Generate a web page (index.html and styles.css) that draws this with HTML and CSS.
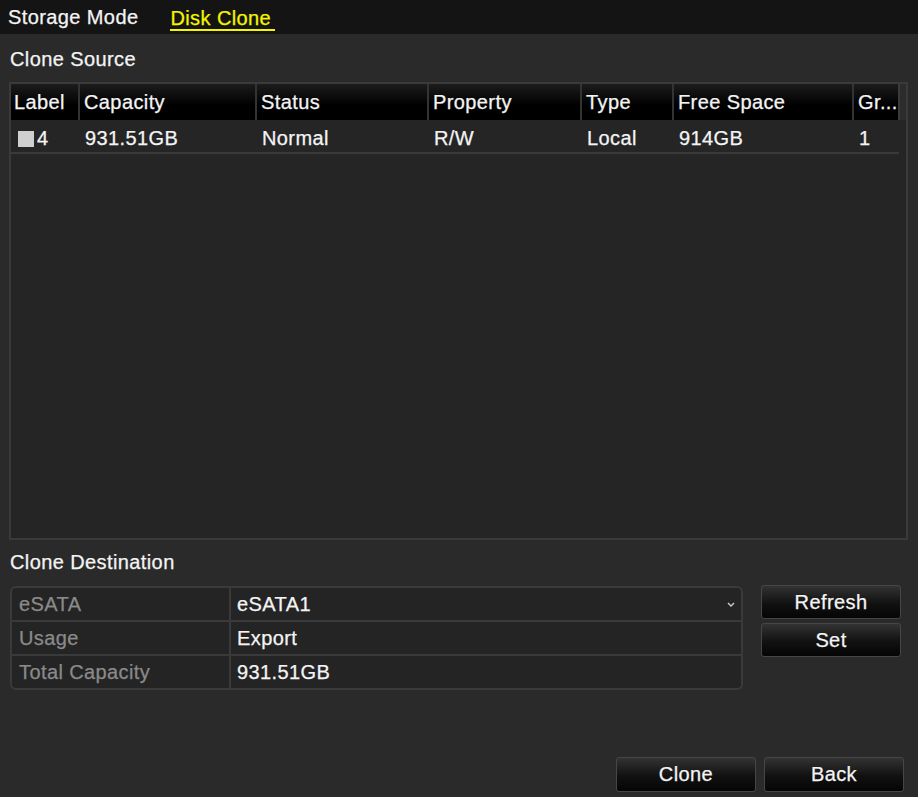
FILE: index.html
```html
<!DOCTYPE html>
<html lang="en">
<head>
    <meta charset="UTF-8">
    <title>Disk Clone</title>
    <link rel="stylesheet" href="styles.css">
</head>
<body>
    <div class="tabs">
        <span class="tab">Storage Mode</span>
        <span class="tab active">Disk Clone</span>
    </div>

    <div class="panel">
        <div class="title source-title">Clone Source</div>
        <div class="source-box">
            <table class="grid">
                <colgroup>
                    <col style="width:68px">
                    <col style="width:177px">
                    <col style="width:172px">
                    <col style="width:153px">
                    <col style="width:92px">
                    <col style="width:180px">
                    <col style="width:46px">
                    <col>
                </colgroup>
                <thead>
                    <tr>
                        <th>Label</th>
                        <th>Capacity</th>
                        <th>Status</th>
                        <th>Property</th>
                        <th>Type</th>
                        <th>Free Space</th>
                        <th>Gr...</th>
                        <th class="filler"></th>
                    </tr>
                </thead>
                <tbody>
                    <tr>
                        <td class="label-cell"><span class="check"></span>4</td>
                        <td>931.51GB</td>
                        <td>Normal</td>
                        <td>R/W</td>
                        <td>Local</td>
                        <td>914GB</td>
                        <td>1</td>
                        <td></td>
                    </tr>
                </tbody>
            </table>
        </div>

        <div class="title dest-title">Clone Destination</div>
        <div class="dest-row">
            <div class="dest-box">
                <div class="dest-line">
                    <div class="dest-key">eSATA</div>
                    <div class="dest-val select">eSATA1
                        <svg class="chevron" width="8" height="5" viewBox="0 0 8 5"><path d="M1 1 L4 4 L7 1" fill="none" stroke="#cfcfcf" stroke-width="1.4"/></svg>
                    </div>
                </div>
                <div class="dest-line">
                    <div class="dest-key">Usage</div>
                    <div class="dest-val">Export</div>
                </div>
                <div class="dest-line">
                    <div class="dest-key">Total Capacity</div>
                    <div class="dest-val">931.51GB</div>
                </div>
            </div>
            <div class="side-buttons">
                <button class="btn">Refresh</button>
                <button class="btn">Set</button>
            </div>
        </div>
    </div>

    <div class="footer">
        <button class="btn">Clone</button>
        <button class="btn">Back</button>
    </div>
</body>
</html>
```

FILE: styles.css
```css
body {
    margin: 0;
    padding: 0;
    width: 918px;
    height: 797px;
    background: #2a2a2a;
    font-family: "Liberation Sans", Arial, sans-serif;
    font-size: 20px;
    letter-spacing: 0.4px;
    color: #f4f4f4;
    -webkit-text-stroke: 0.25px;
    overflow: hidden;
}
.tabs {
    height: 34px;
    background: #141414;
    display: flex;
    align-items: center;
    padding-left: 8px;
    gap: 32px;
}
.tab {
    line-height: 24px;
}
.tab.active {
    color: #f5f500;
    border-bottom: 2px solid #f5f500;
    margin-top: 3px;
    padding-right: 4px;
    line-height: 22px;
}
.panel {
    padding-left: 9px;
}
.title {
    line-height: 24px;
    padding-left: 1px;
}
.source-title {
    padding-top: 13px;
    padding-bottom: 11px;
}
.dest-title {
    padding-top: 10px;
    padding-bottom: 12px;
}
.source-box {
    width: 895px;
    height: 454px;
    border: 2px solid #3a3a3a;
    background: #252525;
}
.grid {
    width: 100%;
    border-collapse: collapse;
    table-layout: fixed;
}
.grid th {
    height: 35px;
    padding: 1px 0 0 4px;
    text-align: left;
    font-weight: normal;
    background: linear-gradient(#1c1c1c, #000 60%);
    border-left: 2px solid #333;
    white-space: nowrap;
    overflow: hidden;
}
.grid th:first-child {
    border-left: 0;
    padding-left: 3px;
}
.grid th.filler {
    background: #2c2c2c;
    border-left: 2px solid #3a3a3a;
    padding: 0;
}
.grid td {
    height: 28px;
    padding: 4px 0 0 6px;
    border-bottom: 2px solid #3a3a3a;
    white-space: nowrap;
}
.grid td:last-child {
    border-bottom: 0;
}
.grid td.label-cell {
    padding-left: 7px;
}
.check {
    display: inline-block;
    width: 16px;
    height: 16px;
    background: #cfcfcf;
    vertical-align: -2px;
    margin-right: 3px;
}
.dest-row {
    display: flex;
    align-items: flex-start;
}
.dest-box {
    width: 729px;
    margin-left: 1px;
    border: 2px solid #3a3a3a;
    border-radius: 6px;
    background: #242424;
    overflow: hidden;
}
.dest-line {
    display: flex;
    height: 32px;
    border-top: 2px solid #3a3a3a;
}
.dest-line:first-child {
    border-top: 0;
}
.dest-key {
    width: 210px;
    padding-left: 7px;
    color: #8a8a8a;
    line-height: 33px;
    border-right: 2px solid #3a3a3a;
}
.dest-val {
    flex: 1;
    padding-left: 6px;
    line-height: 33px;
    position: relative;
}
.chevron {
    position: absolute;
    right: 6px;
    top: 14px;
}
.side-buttons {
    display: flex;
    flex-direction: column;
    gap: 4px;
    margin-left: 18px;
    margin-top: -1px;
}
.btn {
    width: 140px;
    height: 34px;
    font-family: inherit;
    font-size: 20px;
    letter-spacing: 0.4px;
    color: #f4f4f4;
    -webkit-text-stroke: 0.25px;
    background: linear-gradient(#333 0%, #111 55%, #050505 100%);
    border: 1px solid #464646;
    border-radius: 3px;
    padding: 0;
}
.footer {
    display: flex;
    justify-content: flex-end;
    gap: 8px;
    padding-right: 14px;
    margin-top: 67px;
}
.footer .btn {
    height: 35px;
}
```
